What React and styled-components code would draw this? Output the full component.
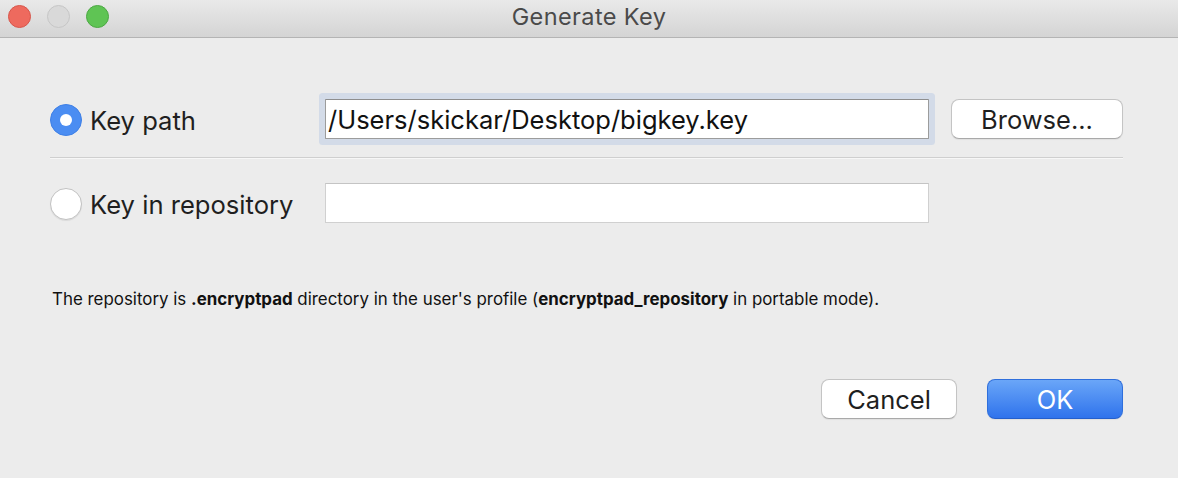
import styled, { createGlobalStyle } from 'styled-components';

const GlobalStyle = createGlobalStyle`
  html, body {
    margin: 0;
    padding: 0;
    background: #ececec;
  }
  body {
    font-family: Inter, "Liberation Sans", Arial, sans-serif;
  }
`;

const Window = styled.div`
  width: 1178px;
  height: 478px;
  display: flex;
  flex-direction: column;
  background: #ececec;
  overflow: hidden;
`;

const TitleBar = styled.div`
  height: 37px;
  flex: none;
  display: grid;
  grid-template-columns: 1fr auto 1fr;
  align-items: center;
  background: linear-gradient(to bottom, #e9e9e9, #d4d4d4);
  border-bottom: 1px solid #b4b4b4;
`;

const Lights = styled.div`
  display: flex;
  gap: 16px;
  padding-left: 8px;
  padding-bottom: 5px;
`;

const Light = styled.span`
  width: 23px;
  height: 23px;
  border-radius: 50%;
  background: ${p => p.$color};
  border: 1px solid ${p => p.$edge};
  box-sizing: border-box;
`;

const Title = styled.div`
  font-size: 23.5px;
  color: #4a4a4a;
  padding-bottom: 4px;
  letter-spacing: 0.4px;
`;

const Content = styled.div`
  flex: 1;
  display: flex;
  flex-direction: column;
  padding: 61px 55px 59px 50px;
`;

const Row = styled.div`
  display: grid;
  grid-template-columns: 275px 604px 1fr;
  align-items: center;
  height: 40px;
`;

const Choice = styled.label`
  display: flex;
  align-items: center;
  gap: 8px;
  font-size: 25.6px;
  color: #1f1f1f;
  padding-top: 2px;
`;

const Radio = styled.span`
  width: 32px;
  height: 32px;
  border-radius: 50%;
  box-sizing: border-box;
  display: flex;
  align-items: center;
  justify-content: center;
  background: ${p => (p.$checked ? '#4b8df2' : '#ffffff')};
  border: 1px solid ${p => (p.$checked ? '#3f80e6' : '#c2c2c2')};
  box-shadow: ${p => (p.$checked ? 'none' : '0 1px 1px rgba(0,0,0,0.08)')};

  &::after {
    content: '';
    display: ${p => (p.$checked ? 'block' : 'none')};
    width: 12px;
    height: 12px;
    border-radius: 50%;
    background: #ffffff;
  }
`;

const Field = styled.div`
  height: 40px;
  box-sizing: border-box;
  background: #ffffff;
  border: 1px solid ${p => (p.$focused ? '#9c9c9c' : '#d0d0d0')};
  border-top-color: ${p => (p.$focused ? '#8e8e8e' : '#c4c4c4')};
  box-shadow: ${p => (p.$focused ? '0 0 0 6px #d3dbe8' : 'none')};
  border-radius: ${p => (p.$focused ? '1px' : '0')};
  display: flex;
  align-items: center;
  padding-left: 2px;
  font-size: 25.5px;
  color: #111111;
  white-space: nowrap;
  overflow: hidden;
`;

const Button = styled.button`
  height: 40px;
  box-sizing: border-box;
  border-radius: 8px;
  font-family: inherit;
  font-size: 25.5px;
  padding: 0;
  cursor: default;
  color: ${p => (p.$primary ? '#ffffff' : '#1f1f1f')};
  background: ${p =>
    p.$primary ? 'linear-gradient(to bottom, #6aa6f8, #2f73ec)' : '#ffffff'};
  border: 1px solid ${p => (p.$primary ? '#2f6fdc' : '#c4c4c4')};
  border-bottom-color: ${p => (p.$primary ? '#245fcc' : '#a9a9a9')};
  box-shadow: 0 1px 1px rgba(0, 0, 0, 0.06);
`;

const BrowseButton = styled(Button)`
  width: 172px;
  justify-self: end;
`;

const Separator = styled.hr`
  margin: 18px 0 24px;
  border: none;
  border-top: 1px solid #cfcfcf;
  border-bottom: 1px solid #f7f7f7;
  height: 0;
`;

const Note = styled.p`
  margin: 66px 0 0 2px;
  font-size: 16.9px;
  color: #111111;

  & b {
    font-weight: 700;
  }
`;

const Footer = styled.div`
  margin-top: auto;
  display: flex;
  justify-content: flex-end;
  gap: 30px;
`;

const FooterButton = styled(Button)`
  width: 136px;
`;

export default function App() {
  return (
    <>
      <GlobalStyle />
      <Window>
        <TitleBar>
          <Lights>
            <Light $color="#ee6a5e" $edge="#d7564b" />
            <Light $color="#d9d9d9" $edge="#c6c6c6" />
            <Light $color="#5fc454" $edge="#4ca843" />
          </Lights>
          <Title>Generate Key</Title>
          <span />
        </TitleBar>
        <Content>
          <Row>
            <Choice>
              <Radio $checked />
              Key path
            </Choice>
            <Field $focused>/Users/skickar/Desktop/bigkey.key</Field>
            <BrowseButton>Browse...</BrowseButton>
          </Row>
          <Separator />
          <Row>
            <Choice>
              <Radio />
              Key in repository
            </Choice>
            <Field />
          </Row>
          <Note>
            The repository is <b>.encryptpad</b> directory in the user's profile (
            <b>encryptpad_repository</b> in portable mode).
          </Note>
          <Footer>
            <FooterButton>Cancel</FooterButton>
            <FooterButton $primary>OK</FooterButton>
          </Footer>
        </Content>
      </Window>
    </>
  );
}
